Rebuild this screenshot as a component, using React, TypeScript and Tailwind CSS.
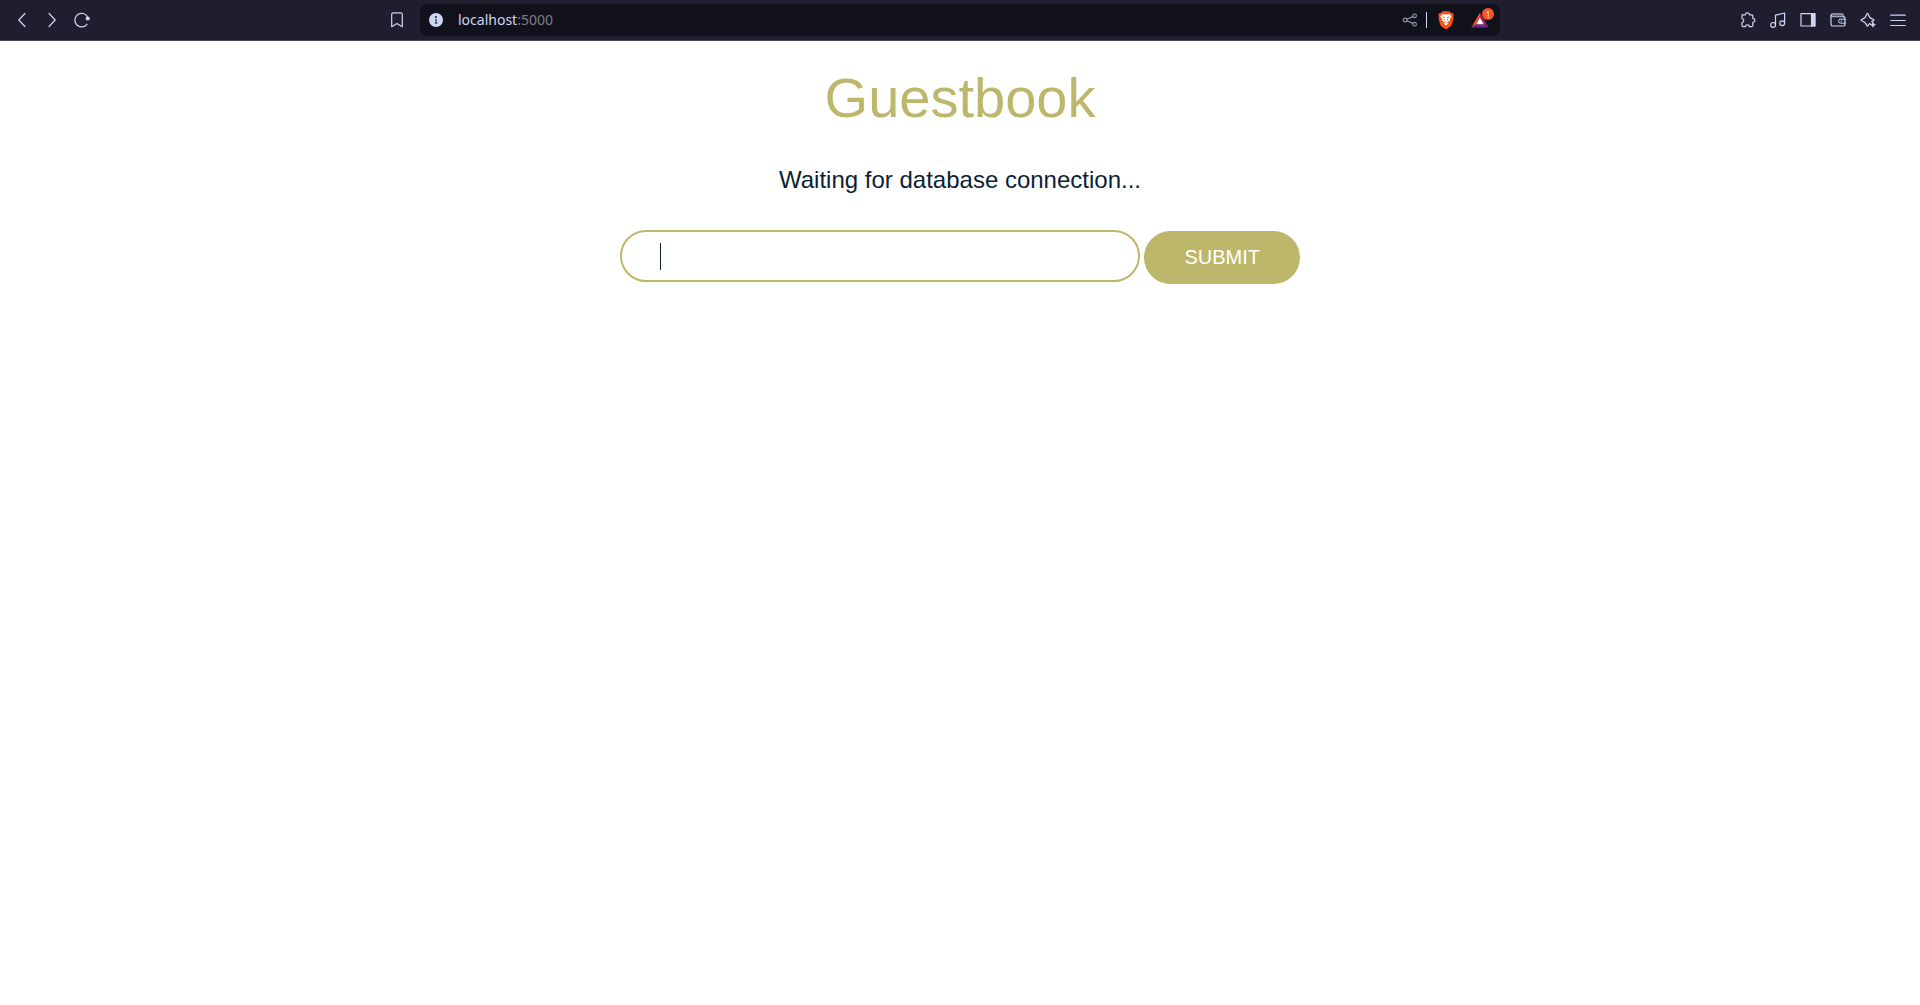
import type { ReactNode } from "react";

function BarButton({ label, children }: { label: string; children: ReactNode }) {
  return (
    <button
      type="button"
      aria-label={label}
      className="flex h-8 w-[30px] shrink-0 items-center justify-center text-[#cdd6f4]"
    >
      {children}
    </button>
  );
}

function Icon({ children, size = 16 }: { children: ReactNode; size?: number }) {
  return (
    <svg
      width={size}
      height={size}
      viewBox="0 0 16 16"
      fill="none"
      stroke="currentColor"
      strokeWidth="1.2"
      strokeLinecap="round"
      strokeLinejoin="round"
      aria-hidden="true"
    >
      {children}
    </svg>
  );
}

function BraveLion() {
  return (
    <svg width="16" height="18" viewBox="0 0 16 18" aria-hidden="true">
      <path
        d="M11.3 0.3H4.7L3 2.1 1.4 1.9 0.2 3.9 0.9 5.6 0.4 7 2.2 13.6C2.5 14.6 3 15.1 3.8 15.7L7.2 17.9C7.7 18.2 8.3 18.2 8.8 17.9L12.2 15.7C13 15.1 13.5 14.6 13.8 13.6L15.6 7 15.1 5.6 15.8 3.9 14.6 1.9 13 2.1Z"
        fill="#fb4f14"
      />
      <path
        d="M8 3.6 10.2 3.2 12.3 3.5 13.6 5.8 11.7 8.3 12 9.6 9.6 11 8.8 10.4 8 11 7.2 10.4 6.4 11 4 9.6 4.3 8.3 2.4 5.8 3.7 3.5 5.8 3.2Z"
        fill="#fff"
      />
      <path d="M5.4 12.2 8 11 10.6 12.2 8 14.4Z" fill="#fff" />
      <path
        d="M4.2 5.6 7 6.1 6.3 7.3ZM11.8 5.6 9 6.1 9.7 7.3ZM6.6 7.6 7.2 9.6 5.6 9ZM9.4 7.6 8.8 9.6 10.4 9Z"
        fill="#fb4f14"
      />
    </svg>
  );
}

function RewardsTriangle() {
  return (
    <svg width="18" height="16" viewBox="0 0 18 16" aria-hidden="true">
      <path d="M9 0.5 0.2 15.5 5.2 12.2 9 5.6Z" fill="#ff4724" />
      <path d="M9 0.5 17.8 15.5 12.8 12.2 9 5.6Z" fill="#9e1f63" />
      <path d="M0.2 15.5H17.8L12.8 12.2H5.2Z" fill="#662d91" />
      <path d="M9 5.6 5.2 12.2H12.8Z" fill="#fff" />
    </svg>
  );
}

function AddressBar() {
  return (
    <div className="flex h-8 min-w-0 items-center rounded-lg bg-[#11111b] pr-[11px] pl-[9px]">
      <button type="button" aria-label="View site information" className="shrink-0">
        <svg width="14" height="14" viewBox="0 0 14 14" aria-hidden="true">
          <circle cx="7" cy="7" r="7" fill="#cdd6f4" />
          <circle cx="7" cy="4" r="0.9" fill="#11111b" />
          <path d="M6 6.4H7.1V10M5.8 10.1H8.4" stroke="#11111b" strokeWidth="0.9" fill="none" />
        </svg>
      </button>
      <p className="ml-[15px] flex-1 truncate font-['Noto_Sans',sans-serif] text-sm text-[#7b7c87]">
        <span className="text-[#cdd6f4]">localhost</span>:5000
      </p>
      <button type="button" aria-label="Share this page" className="shrink-0 text-[#8d93aa]">
        <Icon>
          <circle cx="3.2" cy="8" r="1.9" />
          <circle cx="12.6" cy="3.8" r="1.8" />
          <circle cx="12.6" cy="12.2" r="1.8" />
          <path d="M5 7.2 10.8 4.6M5 8.8 10.8 11.4" />
        </Icon>
      </button>
      <span className="ml-2 h-4 w-px bg-[#cdd6f4]" />
      <button type="button" aria-label="Brave Shields" className="ml-[11px] shrink-0">
        <BraveLion />
      </button>
      <button type="button" aria-label="Brave Rewards" className="relative ml-[17px] shrink-0">
        <RewardsTriangle />
        <span className="absolute -top-1 left-[11px] flex size-3 items-center justify-center rounded-full bg-[#fb542b] font-['Noto_Sans',sans-serif] text-[9px] leading-none text-[#ffd9ce]">
          1
        </span>
      </button>
    </div>
  );
}

function BrowserBar() {
  return (
    <header className="grid h-[41px] grid-cols-[1fr_minmax(0,1080px)_1fr] items-center border-b border-[#45425c] bg-[#1f1d2e]">
      <nav aria-label="Navigation" className="flex items-center pr-2 pl-[7px]">
        <BarButton label="Back">
          <Icon>
            <path d="M11 1.5 4.8 8 11 14.5" />
          </Icon>
        </BarButton>
        <BarButton label="Forward">
          <Icon>
            <path d="M5 1.5 11.2 8 5 14.5" />
          </Icon>
        </BarButton>
        <BarButton label="Reload">
          <Icon>
            <path d="M13.8 5.2A6.8 6.8 0 1 0 13 12.3" />
            <circle cx="13.7" cy="6.5" r="1.5" fill="currentColor" />
          </Icon>
        </BarButton>
        <span className="flex-1" />
        <BarButton label="Bookmark this tab">
          <Icon>
            <path d="M2.7 14.7V2.5Q2.7 0.8 4.4 0.8H11.6Q13.3 0.8 13.3 2.5V14.7L8 11.6Z" />
          </Icon>
        </BarButton>
      </nav>
      <AddressBar />
      <nav aria-label="Toolbar" className="flex items-center justify-end pr-[7px]">
        <BarButton label="Extensions">
          <Icon>
            <path d="M2.2 2.8H5.2C5.4 1.6 6.2 0.9 7.4 0.9S9.4 1.6 9.6 2.8H11.6Q12.8 2.8 12.8 4V6.3C14.2 6.5 15 7.2 15 8.3S14.2 10.1 12.8 10.3V13.4Q12.8 14.6 11.6 14.6H9.4C9.2 13.4 8.4 12.9 7.4 12.9S5.6 13.4 5.4 14.6H3.2Q2 14.6 2 13.4V10.7C3.2 10.4 3.8 9.6 3.8 8.6S3.2 6.9 2 6.6V4Q2 2.8 3.2 2.8" />
          </Icon>
        </BarButton>
        <BarButton label="Media controls">
          <Icon>
            <circle cx="3.1" cy="12.9" r="2.4" />
            <circle cx="12.2" cy="11.3" r="2.4" />
            <path d="M5.5 12.9V3.2L14.6 1V11.3" />
          </Icon>
        </BarButton>
        <BarButton label="Side panel">
          <Icon>
            <path d="M1 1.6H15V14H1Z" />
            <path d="M11.5 2H14.6V13.8H11.5Z" fill="currentColor" />
          </Icon>
        </BarButton>
        <BarButton label="Wallet">
          <Icon>
            <path
              d="M1 3.2Q1 1.8 2.6 1.8H12Q13.2 1.8 13.2 3V4.6H2.6Q1 4.6 1 3.2Z"
              fill="currentColor"
              fillOpacity="0.35"
              strokeOpacity="0.7"
            />
            <path d="M13.2 4.6Q15 4.6 15 6.2V12.6Q15 14 13.6 14H2.8Q1 14 1 12.2V3.4" />
            <path d="M15 7.2H10.6A2 2 0 0 0 10.6 11.2H15M11 9.2H11.6" strokeWidth="1" />
          </Icon>
        </BarButton>
        <BarButton label="Leo AI">
          <Icon>
            <path d="M10.6 12.2 9.6 11.4Q8.7 12 8.3 13.3 7.5 15.2 6.7 13.3C6 10.9 5 9.9 2.1 9Q0 8.2 2.1 7.4C5 6.4 5.9 5.5 6.7 2.4Q7.5 0.4 8.3 2.4C9.1 5.5 10 6.4 12.9 7.4Q15 8.2 12.9 9L11.6 9.6" />
            <path d="M12.9 10.2 13.6 12 15.4 12.7 13.6 13.4 12.9 15.2 12.2 13.4 10.4 12.7 12.2 12Z" fill="currentColor" strokeWidth="0.8" />
          </Icon>
        </BarButton>
        <BarButton label="Menu">
          <Icon>
            <path d="M0.8 3.2H15.2M0.8 8.5H15.2M0.8 13.5H15.2" />
          </Icon>
        </BarButton>
      </nav>
    </header>
  );
}

export default function App() {
  return (
    <div className="min-h-screen bg-white font-['Liberation_Sans',Arial,sans-serif] text-[#0b1f33]">
      <BrowserBar />
      <main className="flex flex-col items-center px-4 pt-[25px] text-center">
        <h1 className="text-[56px] leading-16 text-[#bdb76b]">Guestbook</h1>
        <p className="mt-9 text-2xl leading-7">Waiting for database connection...</p>
        <form
          className="mt-9 flex w-full max-w-[680px] items-start gap-1"
          onSubmit={(event) => event.preventDefault()}
        >
          <div className="relative min-w-0 flex-1">
            <input
              type="text"
              aria-label="Guestbook entry"
              autoComplete="off"
              className="block h-[52px] w-full rounded-full border-2 border-[#bdb76b] bg-white px-[38px] text-2xl caret-transparent outline-none"
            />
            <span className="pointer-events-none absolute top-[13px] left-10 h-[27px] w-px bg-[#0b1f33]" />
          </div>
          <button
            type="submit"
            className="mt-px h-[53px] shrink-0 rounded-full bg-[#bdb76b] px-10 pb-0.5 text-xl text-white"
          >
            SUBMIT
          </button>
        </form>
      </main>
    </div>
  );
}
